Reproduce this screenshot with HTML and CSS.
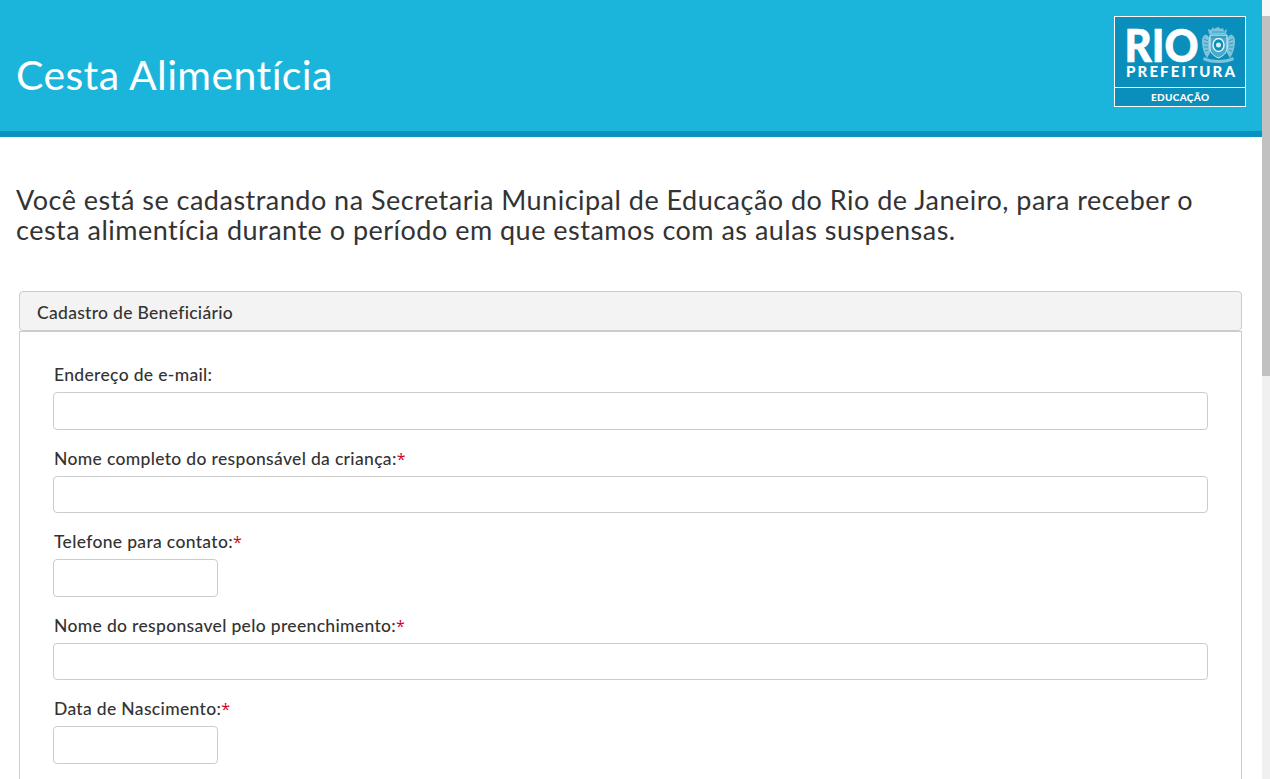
FILE: index.html
```html
<!DOCTYPE html>
<html lang="pt-BR">
<head>
<meta charset="utf-8">
<title>Cesta Alimentícia</title>
<link rel="stylesheet" href="styles.css">
</head>
<body>
<div class="window">
  <div class="page">
    <header class="topbar">
      <h1 class="title">Cesta Alimentícia</h1>
      <svg class="logo" viewBox="0 0 132 91" role="img" aria-label="Rio Prefeitura Educação">
        <rect class="logo-bg" x="0.500" y="0.500" width="131" height="90"/>
        <line class="logo-rule" x1="0" y1="71.500" x2="132" y2="71.500"/>
        <text class="logo-rio" x="10.500" y="46" textLength="74" lengthAdjust="spacingAndGlyphs">RIO</text>
        <text class="logo-pref" x="12" y="60.500" textLength="109" lengthAdjust="spacing">PREFEITURA</text>
        <text class="logo-edu" x="37" y="85" textLength="58" lengthAdjust="spacing">EDUCAÇÃO</text>
        <g class="crest">
          <path class="crest-soft" d="M88 25c0-5 3-7 5-6l3 3v15l-3 5c-3-4-5-11-5-17zM121 25c0-5-3-7-5-6l-3 3v15l3 5c3-4 5-11 5-17z"/>
          <path class="crest-soft" d="M95 18l-1-5 3 1 2-3 1 2 2-1 2-1 3 2 2-1 1 3 3-2-1 5z"/>
          <path class="crest-soft" d="M90 41c7 4 22 4 29 0l1 3c-7 4-24 4-31 0z"/>
          <path class="crest-shield" d="M96 19h17v13c0 5-4 8-8.500 10-4.500-2-8.500-5-8.500-10z"/>
          <ellipse class="crest-ring" cx="104.500" cy="29" rx="5.500" ry="6.500"/>
          <circle class="crest-core" cx="104.500" cy="29" r="2.500"/>
          <path class="crest-hatch" d="M90 23l4 2M90 27l4 1M90 31l4 0M91 35l3-1M119 23l-4 2M119 27l-4 1M119 31l-4 0M118 35l-3-1M98 16h13M97 21h15"/>
        </g>
      </svg>
    </header>

    <p class="intro">Você está se cadastrando na Secretaria Municipal de Educação do Rio de Janeiro, para receber o cesta alimentícia durante o período em que estamos com as aulas suspensas.</p>

    <section class="panel">
      <div class="panel-heading">Cadastro de Beneficiário</div>
      <form class="panel-body">
        <div class="field">
          <label class="label">Endereço de e-mail:</label>
          <input class="input" type="text">
        </div>
        <div class="field">
          <label class="label">Nome completo do responsável da criança:<span class="req">*</span></label>
          <input class="input" type="text">
        </div>
        <div class="field">
          <label class="label">Telefone para contato:<span class="req">*</span></label>
          <input class="input input-short" type="text">
        </div>
        <div class="field">
          <label class="label">Nome do responsavel pelo preenchimento:<span class="req">*</span></label>
          <input class="input" type="text">
        </div>
        <div class="field">
          <label class="label">Data de Nascimento:<span class="req">*</span></label>
          <input class="input input-short" type="text">
        </div>
      </form>
    </section>
  </div>
  <div class="scrollbar" aria-hidden="true">
    <div class="scroll-arrow"></div>
    <div class="scroll-thumb"></div>
  </div>
</div>
</body>
</html>
```
FILE: styles.css
```css
* { box-sizing: border-box; }
html, body { margin: 0; height: 100%; overflow: hidden; }
body { background: #fff; color: #333; font-family: Lato, "Open Sans", sans-serif; }
.window { display: flex; height: 779px; overflow: hidden; }
.page { flex: 1; min-width: 0; }
.scrollbar { width: 8px; background: #f0f0f0; display: flex; flex-direction: column; }
.scroll-arrow { height: 16px; background: #f7f7f7; }
.scroll-thumb { height: 360px; background: #c1c1c1; }

.topbar {
  height: 137px;
  background: #1bb5dc;
  border-bottom: 6px solid #0a93c0;
  padding: 16px 16px 0;
  display: flex;
  justify-content: space-between;
  align-items: flex-start;
}
.title { margin: 35px 0 0; font-size: 41px; line-height: 48px; font-weight: 400; color: #fff; letter-spacing: .4px; }

.logo { display: block; width: 132px; height: 91px; flex: none; font-family: Lato, sans-serif; }
.logo-bg { fill: #0a8fbc; stroke: #fff; stroke-width: 1; }
.logo-rule { stroke: #fff; stroke-width: 1; }
.logo-rio { fill: #fff; stroke: #fff; stroke-width: .7; font-size: 46px; font-weight: 900; }
.logo-pref { fill: #fff; font-size: 15px; font-weight: 900; }
.logo-edu { fill: #fff; font-size: 10px; font-weight: 900; }
.crest-soft { fill: #7fc3db; }
.crest-shield { fill: #4aa9ca; stroke: #d8eff7; stroke-width: 1; }
.crest-ring { fill: #0a8fbc; stroke: #eaf7fb; stroke-width: 1.400; }
.crest-core { fill: #d6eef6; }
.crest-hatch { fill: none; stroke: #0a8fbc; stroke-width: .7; }

.intro { margin: 48px 16px 0; font-size: 27px; line-height: 30px; color: #333; letter-spacing: .49px; }

.panel { margin: 46px 20px 0 19px; }
.panel-heading {
  height: 40px;
  background: #f3f3f3;
  border: 1px solid #ccc;
  border-radius: 4px;
  padding: 0 17px;
  font-size: 17.500px;
  line-height: 42px;
  font-weight: 500;
  letter-spacing: .3px;
  color: #333;
}
.panel-body { border: 1px solid #ccc; min-height: 520px; padding: 32px 33px 0; }
.field { margin-bottom: 18px; }
.label { display: block; font-size: 17.500px; line-height: 21px; font-weight: 500; letter-spacing: .33px; color: #333; margin-bottom: 7px; padding-left: 1px; }
.req { color: #d0021b; font-family: "Open Sans", sans-serif; font-size: 16px; line-height: 1; }
.input { display: block; width: 100%; height: 37.500px; border: 1px solid #ccc; border-radius: 4px; background: #fff; }
.input-short { width: 165px; }
```
